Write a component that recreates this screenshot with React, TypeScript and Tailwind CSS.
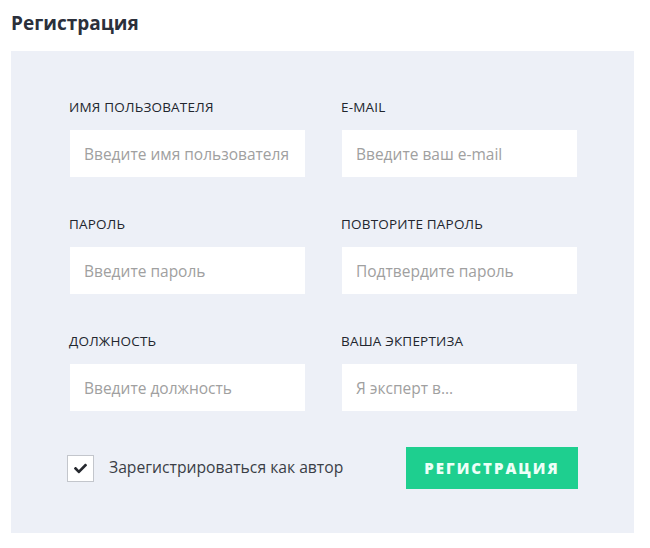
import { FaCheck } from 'react-icons/fa';

const fields = [
  { label: 'Имя пользователя', placeholder: 'Введите имя пользователя', type: 'text' },
  { label: 'E-mail', placeholder: 'Введите ваш e-mail', type: 'email' },
  { label: 'Пароль', placeholder: 'Введите пароль', type: 'password' },
  { label: 'Повторите пароль', placeholder: 'Подтвердите пароль', type: 'password' },
  { label: 'Должность', placeholder: 'Введите должность', type: 'text' },
  { label: 'Ваша экпертиза', placeholder: 'Я эксперт в...', type: 'text' },
];

export default function App() {
  return (
    <div className="w-[650px] h-[548px] bg-white pl-[11px] font-['Open_Sans',sans-serif]">
      <h1 className="h-[51px] pt-[9px] text-[19px] leading-[28px] font-bold text-[#2b303b]">
        Регистрация
      </h1>

      <div className="w-[623px] h-[482px] bg-[#edf0f7] px-[58px] pt-[47px]">
        {/* Fields */}
        <div className="grid grid-cols-2 gap-x-[37px] gap-y-[38px]">
          {fields.map((f) => (
            <label key={f.label} className="flex flex-col">
              <span className="h-[18px] text-[13.5px] leading-[18px] font-medium uppercase tracking-[0.2px] text-[#22262e]">
                {f.label}
              </span>
              <input
                type={f.type}
                placeholder={f.placeholder}
                className="mt-[14px] ml-[1px] h-[47px] w-[235px] bg-white px-[14px] text-[15.5px] text-[#333] placeholder:text-[#a0a0a0] outline-none"
              />
            </label>
          ))}
        </div>

        {/* Footer */}
        <div className="mt-[36px] flex items-center justify-between">
          <label className="flex items-center gap-[15px] -ml-[2px]">
            <span className="flex h-[27px] w-[27px] items-center justify-center border border-[#c3c6cc] bg-white">
              <FaCheck className="h-[13px] w-[13px] text-[#26292f]" />
            </span>
            <span className="text-[15.7px] text-[#3a3e46]">Зарегистрироваться как автор</span>
          </label>
          <button className="mr-[-2px] h-[42px] w-[172px] bg-[#1ecf8f] text-[15px] font-extrabold uppercase tracking-[2px] text-[#eefff8]">
            Регистрация
          </button>
        </div>
      </div>
    </div>
  );
}
